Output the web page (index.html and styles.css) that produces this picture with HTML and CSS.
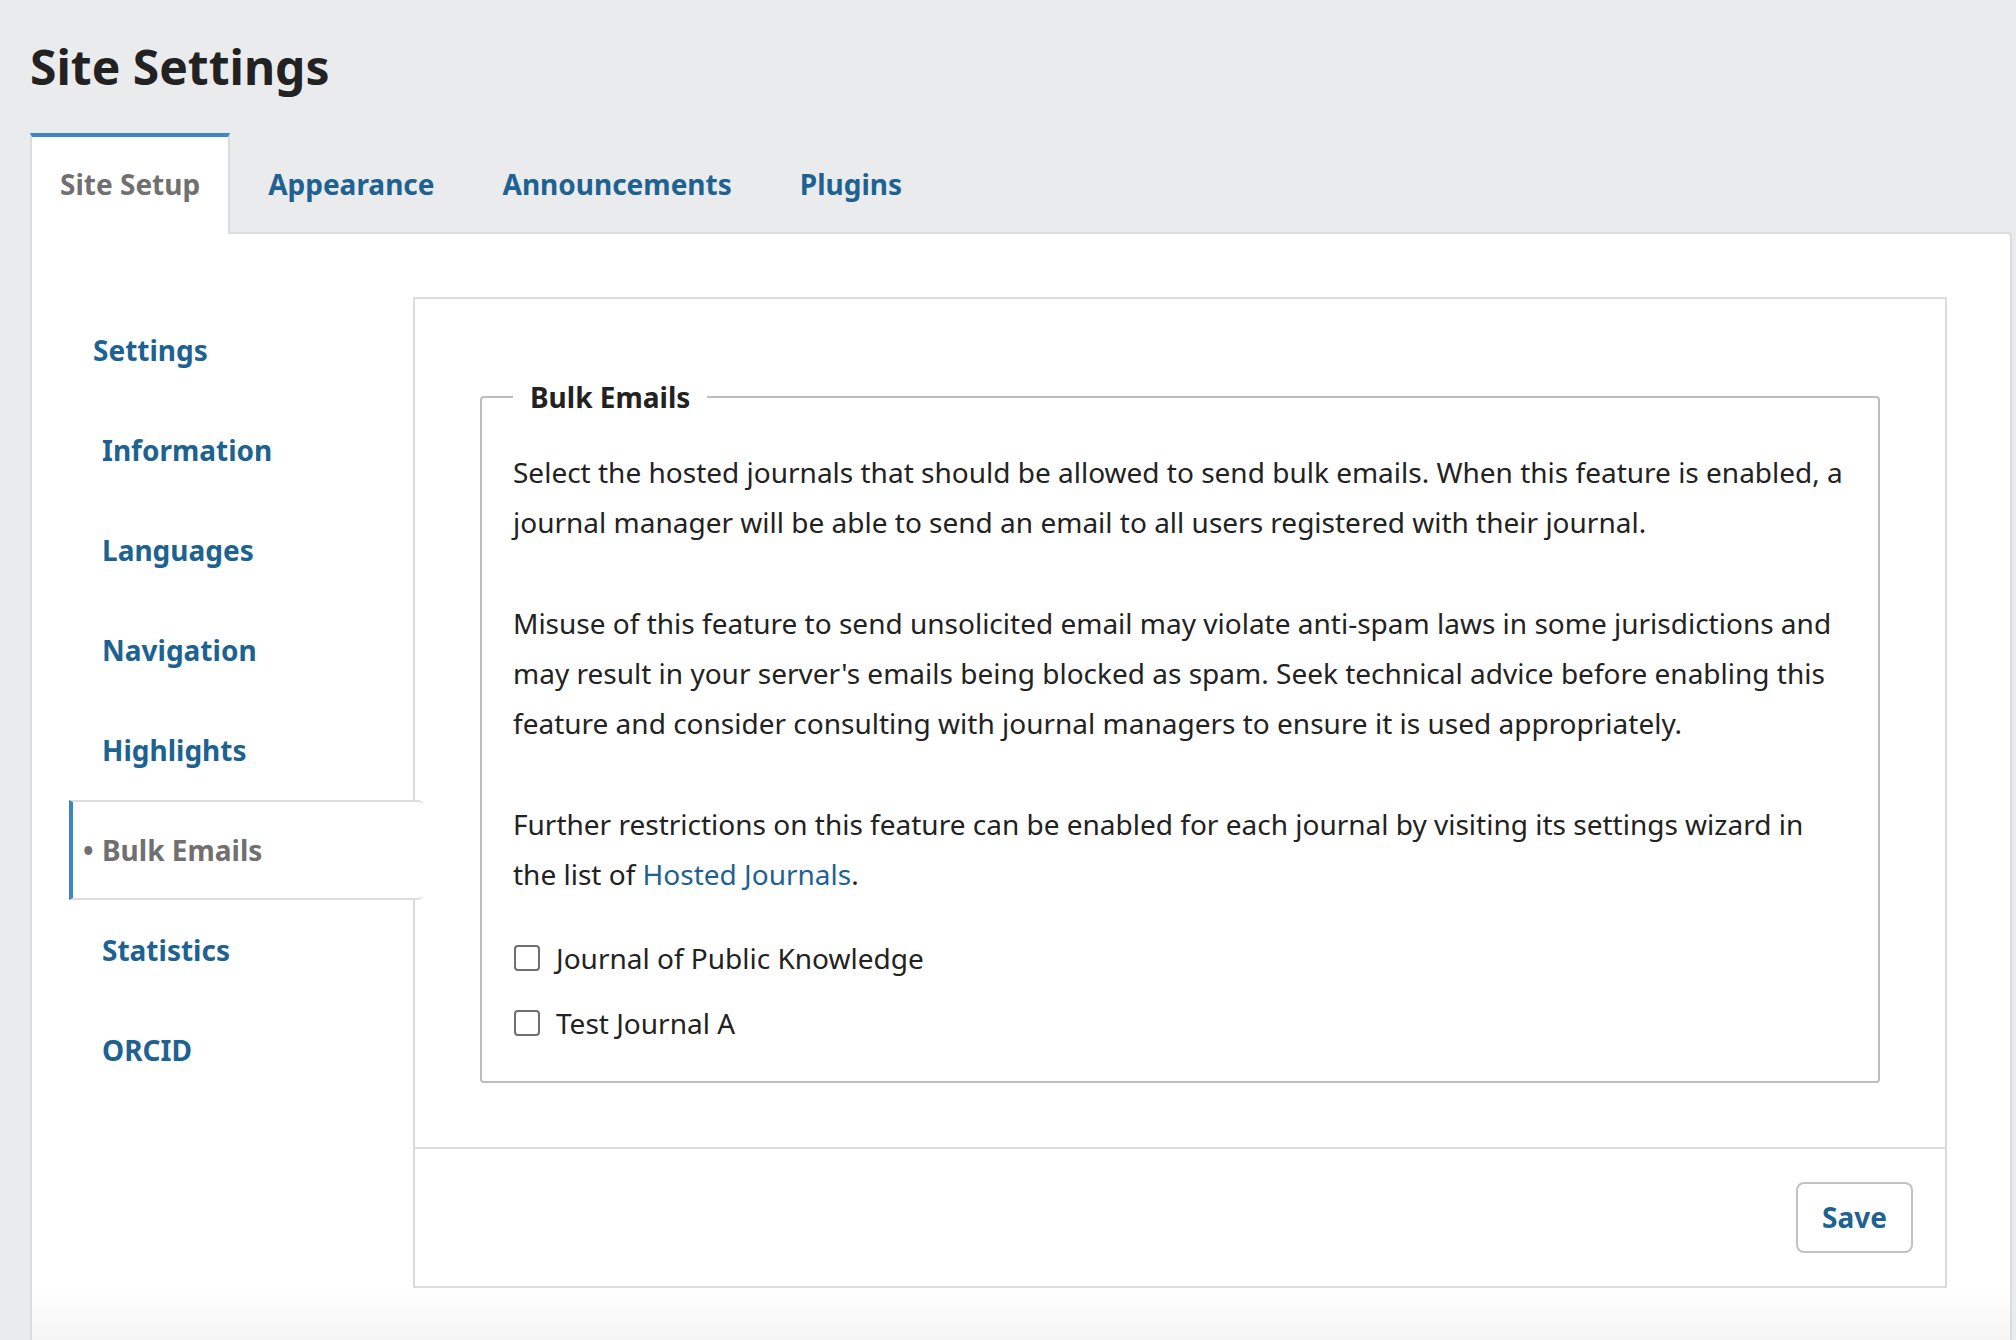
FILE: index.html
```html
<!DOCTYPE html>
<html lang="en">
<head>
<meta charset="utf-8">
<title>Site Settings</title>
<link rel="stylesheet" href="styles.css">
</head>
<body>
<div class="page">
  <h1 class="page-title">Site Settings</h1>
  <div class="tabs">
    <a class="tab tab--active">Site Setup</a>
    <a class="tab">Appearance</a>
    <a class="tab">Announcements</a>
    <a class="tab">Plugins</a>
  </div>
  <div class="panel">
    <nav class="side-nav">
      <ul class="side-nav__list">
        <li class="side-nav__item side-nav__item--parent">Settings</li>
        <li class="side-nav__item">Information</li>
        <li class="side-nav__item">Languages</li>
        <li class="side-nav__item">Navigation</li>
        <li class="side-nav__item">Highlights</li>
        <li class="side-nav__item side-nav__item--active">Bulk Emails</li>
        <li class="side-nav__item">Statistics</li>
        <li class="side-nav__item">ORCID</li>
      </ul>
    </nav>
    <form class="form-box">
      <div class="form-box__body">
        <fieldset class="group">
          <legend class="group__legend">Bulk Emails</legend>
          <div class="group__desc">
            <p>Select the hosted journals that should be allowed to send bulk emails. When this feature is enabled, a journal manager will be able to send an email to all users registered with their journal.</p>
            <p>Misuse of this feature to send unsolicited email may violate anti-spam laws in some jurisdictions and may result in your server's emails being blocked as spam. Seek technical advice before enabling this feature and consider consulting with journal managers to ensure it is used appropriately.</p>
            <p>Further restrictions on this feature can be enabled for each journal by visiting its settings wizard in the list of <a class="link">Hosted Journals</a>.</p>
          </div>
          <div class="checks">
            <label class="check"><input type="checkbox" class="check__box"><span>Journal of Public Knowledge</span></label>
            <label class="check"><input type="checkbox" class="check__box"><span>Test Journal A</span></label>
          </div>
        </fieldset>
      </div>
      <div class="form-box__footer">
        <button type="button" class="btn">Save</button>
      </div>
    </form>
  </div>
</div>
</body>
</html>
```

FILE: styles.css
```css
* { box-sizing: border-box; }
html, body { margin: 0; padding: 0; }
body {
  background: #eaebed;
  font-family: "Noto Sans", "Open Sans", sans-serif;
  color: #222;
  overflow: hidden;
}
.page {
  padding: 0 4px 0 30px;
  height: 1340px;
  display: flex;
  flex-direction: column;
}
.page-title {
  margin: 38px 0 0 0;
  font-size: 48px;
  line-height: 57.6px;
  font-weight: 700;
  color: #222;
}
.tabs {
  display: flex;
  gap: 8px;
  margin-top: 37px;
  position: relative;
  z-index: 2;
}
.tab {
  display: block;
  font-size: 28px;
  font-weight: 700;
  line-height: 50px;
  padding: 22px 28px 23px;
  border-top: 4px solid transparent;
  border-left: 2px solid transparent;
  border-right: 2px solid transparent;
  color: #1e6292;
  margin-bottom: -2px;
}
.tab--active {
  background: #fff;
  color: #707070;
  border-top-color: #3d86c6;
  border-left-color: #dcdcdc;
  border-right-color: #dcdcdc;
  padding-bottom: 25px;
}
.panel {
  flex: 1;
  display: flex;
  align-items: flex-start;
  background: linear-gradient(to bottom, #fff calc(100% - 52px), #f5f5f5 100%);
  border: 2px solid #dcdcdc;
  border-bottom: none;
  border-top-right-radius: 4px;
  padding: 63px 63px 0 0;
}
.side-nav {
  flex: 0 0 381px;
  position: relative;
  z-index: 1;
}
.side-nav__list {
  list-style: none;
  margin: 3px 0 0 0;
  padding: 0 0 0 37px;
}
.side-nav__item {
  position: relative;
  font-size: 28px;
  font-weight: 700;
  line-height: 50px;
  color: #1e6292;
  padding: 23px 0 23px 29px;
  border-top: 2px solid transparent;
  border-bottom: 2px solid transparent;
  border-left: 4px solid transparent;
}
.side-nav__item--parent {
  padding-left: 20px;
}
.side-nav__item--active {
  color: #707070;
  background: #fff;
  border-top-color: #dedede;
  border-bottom-color: #dedede;
  border-left-color: #3d86c6;
  border-radius: 0 5px 5px 0;
  margin-right: -10px;
}
.side-nav__item--active::before {
  content: "\2022";
  position: absolute;
  left: 10px;
  top: 23px;
  color: #707070;
  font-weight: 700;
}
.form-box {
  flex: 1;
  margin: 0;
  border: 2px solid #dcdcdc;
  background: #fff;
}
.form-box__body {
  padding: 73px 65px 64px 65px;
}
.group {
  margin: 0;
  border: 2px solid #bdbdbd;
  border-radius: 4px;
  padding: 25px 31px 33px 31px;
  min-width: 0;
}
.group__legend {
  font-size: 28px;
  font-weight: 700;
  line-height: 50px;
  padding: 0 17px;
  color: #222;
}
.group__desc p {
  margin: 0 0 51px 0;
  font-size: 28px;
  line-height: 50px;
  color: #222;
}
.group__desc p:last-child { margin-bottom: 0; }
.link { color: #1e6292; text-decoration: none; }
.checks {
  margin-top: 34px;
  display: flex;
  flex-direction: column;
  gap: 15px;
}
.check {
  display: flex;
  align-items: center;
  font-size: 28px;
  line-height: 50px;
  color: #222;
}
.check__box {
  appearance: none;
  -webkit-appearance: none;
  width: 26px;
  height: 26px;
  margin: 0 16px 0 1px;
  border: 2px solid #6f6f6f;
  border-radius: 4px;
  background: #fff;
  flex: 0 0 auto;
}
.form-box__footer {
  border-top: 2px solid #dcdcdc;
  padding: 33px 32px 33px 32px;
  display: flex;
  justify-content: flex-end;
}
.btn {
  font-family: inherit;
  font-size: 28px;
  font-weight: 700;
  line-height: 50px;
  color: #1e6292;
  background: #fff;
  border: 2px solid #c2c2c2;
  border-radius: 8px;
  padding: 8px 24px;
  height: 71px;
}
```
